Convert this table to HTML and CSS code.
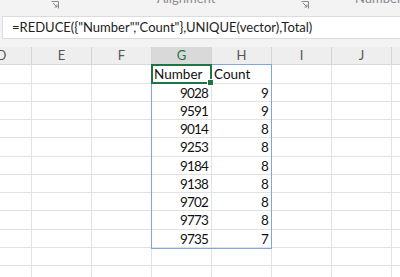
FILE: index.html
```html
<!DOCTYPE html>
<html>
<head>
<meta charset="utf-8">
<link rel="stylesheet" href="styles.css">
</head>
<body>
<div class="ribbon">
  <span class="launcher l1"><svg width="8" height="8" viewBox="0 0 8 8"><path d="M0.5 0.5h7v7" fill="none" stroke="#8a8a8a"/><path d="M2 2l4 4M3.5 6H6V3.5" fill="none" stroke="#8a8a8a"/></svg></span>
  <span class="rlabel lab-align">Alignment</span>
  <span class="launcher l2"><svg width="8" height="8" viewBox="0 0 8 8"><path d="M0.5 0.5h7v7" fill="none" stroke="#8a8a8a"/><path d="M2 2l4 4M3.5 6H6V3.5" fill="none" stroke="#8a8a8a"/></svg></span>
  <span class="rlabel lab-num">Number</span>
</div>
<div class="fbar">
  <div class="fbox">=REDUCE({"Number","Count"},UNIQUE(vector),Total)</div>
</div>
<div class="sheet">
  <div class="hd">D</div><div class="hd">E</div><div class="hd">F</div><div class="hd sel">G</div><div class="hd">H</div><div class="hd">I</div><div class="hd">J</div><div class="hd">K</div>

  <div class="c"></div><div class="c"></div><div class="c"></div><div class="c t">Number</div><div class="c t">Count</div><div class="c"></div><div class="c"></div><div class="c"></div>
  <div class="c"></div><div class="c"></div><div class="c"></div><div class="c n">9028</div><div class="c n">9</div><div class="c"></div><div class="c"></div><div class="c"></div>
  <div class="c"></div><div class="c"></div><div class="c"></div><div class="c n">9591</div><div class="c n">9</div><div class="c"></div><div class="c"></div><div class="c"></div>
  <div class="c"></div><div class="c"></div><div class="c"></div><div class="c n">9014</div><div class="c n">8</div><div class="c"></div><div class="c"></div><div class="c"></div>
  <div class="c"></div><div class="c"></div><div class="c"></div><div class="c n">9253</div><div class="c n">8</div><div class="c"></div><div class="c"></div><div class="c"></div>
  <div class="c"></div><div class="c"></div><div class="c"></div><div class="c n">9184</div><div class="c n">8</div><div class="c"></div><div class="c"></div><div class="c"></div>
  <div class="c"></div><div class="c"></div><div class="c"></div><div class="c n">9138</div><div class="c n">8</div><div class="c"></div><div class="c"></div><div class="c"></div>
  <div class="c"></div><div class="c"></div><div class="c"></div><div class="c n">9702</div><div class="c n">8</div><div class="c"></div><div class="c"></div><div class="c"></div>
  <div class="c"></div><div class="c"></div><div class="c"></div><div class="c n">9773</div><div class="c n">8</div><div class="c"></div><div class="c"></div><div class="c"></div>
  <div class="c"></div><div class="c"></div><div class="c"></div><div class="c n">9735</div><div class="c n">7</div><div class="c"></div><div class="c"></div><div class="c"></div>
  <div class="c"></div><div class="c"></div><div class="c"></div><div class="c"></div><div class="c"></div><div class="c"></div><div class="c"></div><div class="c"></div>
  <div class="c"></div><div class="c"></div><div class="c"></div><div class="c"></div><div class="c"></div><div class="c"></div><div class="c"></div><div class="c"></div>

  <div class="range"></div>
  <div class="active"><span class="handle"></span></div>
</div>
</body>
</html>
```

FILE: styles.css
```css
html, body {
  margin: 0;
  padding: 0;
  background: #f3f3f3;
  overflow: hidden;
  width: 400px;
  height: 277px;
}
.ribbon {
  position: relative;
  height: 11px;
  overflow: hidden;
  background: #f3f3f3;
  font-family: "Lato", "Open Sans", sans-serif;
  font-size: 13px;
  color: #8a8a8a;
}
.launcher {
  position: absolute;
  top: -4px;
}
.l1 { left: 51px; }
.l2 { left: 301px; }
.rlabel {
  position: absolute;
  top: -10px;
  line-height: 16px;
}
.lab-align { left: 157px; }
.lab-num { left: 355px; }
.fbar {
  height: 36px;
  padding-top: 5px;
  box-sizing: border-box;
  padding-left: 2px;
}
.fbox {
  height: 23px;
  background: #fff;
  border: 1px solid #dcdcdc;
  border-right: none;
  box-sizing: border-box;
  padding-left: 9px;
  font-family: "Lato", "Open Sans", sans-serif;
  font-size: 13px;
  line-height: 21px;
  color: #222;
  white-space: nowrap;
}
.sheet {
  position: relative;
  display: grid;
  margin-left: -28px;
  grid-template-columns: repeat(8, 60px);
  grid-template-rows: 18px 19px 18px 18px 18px 19px 18px 18px 18px 19px 18px 18px 18px;
  background: #fff;
  font-family: "Lato", "Open Sans", sans-serif;
}
.hd {
  background: #eeeeee;
  border-right: 1px solid #d4d4d4;
  border-bottom: 1px solid #d8d8d8;
  box-sizing: border-box;
  text-align: center;
  font-size: 13px;
  line-height: 17px;
  color: #555;
}
.hd.sel {
  background: #d9d9d9;
  color: #217346;
  border-bottom: 1px solid #217346;
}
.c {
  border-right: 1px solid #e2e2e2;
  border-bottom: 1px solid #e2e2e2;
  box-sizing: border-box;
  font-size: 13.5px;
  line-height: 18px;
  color: #111;
  white-space: nowrap;
  overflow: hidden;
}
.t {
  padding-left: 2px;
}
.n {
  text-align: right;
  padding-right: 3px;
  letter-spacing: -0.8px;
}
.range {
  position: absolute;
  left: 179px;
  top: 17px;
  width: 121px;
  height: 185px;
  box-sizing: border-box;
  border: 1px solid #7fa6de;
  pointer-events: none;
}
.active {
  position: absolute;
  left: 179px;
  top: 17px;
  width: 61px;
  height: 20px;
  box-sizing: border-box;
  border: 2px solid #217346;
}
.handle {
  position: absolute;
  right: -4px;
  bottom: -4px;
  width: 5px;
  height: 5px;
  background: #217346;
  border: 1px solid #fff;
}
```
